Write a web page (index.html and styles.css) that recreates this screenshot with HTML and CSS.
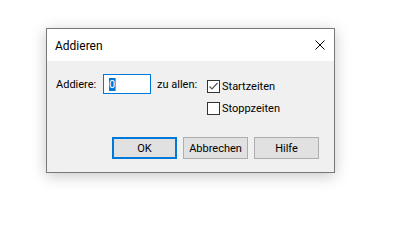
FILE: index.html
```html
<!DOCTYPE html>
<html lang="de">
<head>
<meta charset="utf-8">
<title>Addieren</title>
<link rel="stylesheet" href="styles.css">
</head>
<body>
<div class="dialog">
  <div class="titlebar">
    <span class="title">Addieren</span>
    <svg class="close" width="10" height="10" viewBox="0 0 10 10"><path d="M0.5 0.5 L9.5 9.5 M9.5 0.5 L0.5 9.5" stroke="#000" stroke-width="1" fill="none"/></svg>
  </div>
  <div class="content">
    <div class="row">
      <span class="lbl-add">Addiere:</span>
      <div class="input"><span class="sel">0</span><span class="caret"></span></div>
      <span class="lbl-all">zu allen:</span>
      <div class="checks">
        <div class="check">
          <span class="box"><svg width="11" height="11" viewBox="0 0 11 11"><path d="M1.5 5.5 L4 8 L9.5 2" stroke="#555" stroke-width="1.2" fill="none"/></svg></span>
          <span class="clabel">Startzeiten</span>
        </div>
        <div class="check">
          <span class="box"></span>
          <span class="clabel">Stoppzeiten</span>
        </div>
      </div>
    </div>
    <div class="buttons">
      <div class="btn default">OK</div>
      <div class="btn">Abbrechen</div>
      <div class="btn">Hilfe</div>
    </div>
  </div>
</div>
</body>
</html>
```
FILE: styles.css
```css
html, body {
  margin: 0;
  padding: 0;
  background: #ffffff;
}
body {
  font-family: Roboto, "Noto Sans", sans-serif;
  font-size: 11px;
  color: #000;
  width: 412px;
  height: 216px;
  overflow: hidden;
}
.dialog {
  margin: 28px 0 0 46px;
  width: 289px;
  height: 145px;
  box-sizing: border-box;
  border: 1px solid #777777;
  background: #f0f0f0;
  box-shadow: 0 3px 14px rgba(0, 0, 0, 0.22);
  display: flex;
  flex-direction: column;
}
.titlebar {
  height: 32px;
  background: #ffffff;
  display: flex;
  align-items: center;
  justify-content: space-between;
  padding: 0 9px 0 8px;
}
.title {
  font-size: 12px;
  line-height: 16px;
  margin-top: 1px;
}
.close {
  display: block;
}
.content {
  flex: 1;
  display: flex;
  flex-direction: column;
  justify-content: space-between;
  padding: 13px 15px 13px 9px;
}
.row {
  display: flex;
  align-items: flex-start;
}
.lbl-add {
  width: 47px;
  line-height: 20px;
  margin-top: 1px;
}
.input {
  width: 48px;
  height: 20px;
  box-sizing: border-box;
  border: 1px solid #0078d7;
  background: #fff;
  display: flex;
  align-items: center;
  padding-left: 5px;
}
.sel {
  background: #0078d7;
  color: #fff;
  line-height: 13px;
  height: 13px;
  width: 6px;
  display: block;
  text-align: left;
}
.caret {
  width: 1px;
  height: 13px;
  background: #ff8a00;
  display: block;
}
.lbl-all {
  width: 50px;
  margin-left: 6px;
  line-height: 20px;
  margin-top: 1px;
}
.checks {
  display: flex;
  flex-direction: column;
  gap: 9px;
  margin-top: 6px;
}
.check {
  display: flex;
  align-items: center;
  height: 13px;
}
.box {
  width: 13px;
  height: 13px;
  box-sizing: border-box;
  border: 1px solid #333333;
  background: #ffffff;
  display: flex;
  align-items: center;
  justify-content: center;
}
.box svg { display: block; }
.clabel {
  margin-left: 2px;
  line-height: 13px;
}
.buttons {
  display: flex;
  justify-content: flex-end;
  gap: 6px;
}
.btn {
  width: 65px;
  height: 22px;
  box-sizing: border-box;
  border: 1px solid #adadad;
  background: #e1e1e1;
  display: flex;
  align-items: center;
  justify-content: center;
}
.btn.default {
  border: 2px solid #0078d7;
}
```
